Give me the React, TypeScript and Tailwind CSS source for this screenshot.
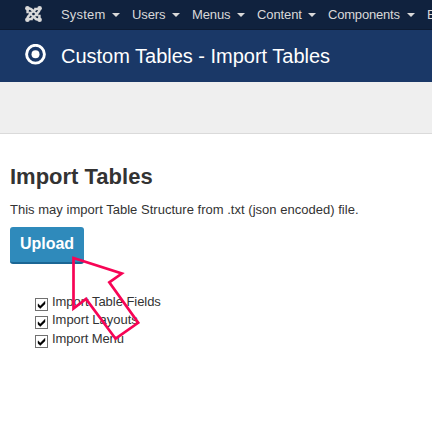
import React from 'react';

const menus = [
  { label: 'System', width: 'w-[71px]', spacing: 'tracking-[0.2px]' },
  { label: 'Users', width: 'w-[60px]', spacing: 'tracking-[-0.1px]' },
  { label: 'Menus', width: 'w-[65px]', spacing: 'tracking-[-0.1px]' },
  { label: 'Content', width: 'w-[71px]', spacing: 'tracking-[-0.1px]' },
  { label: 'Components', width: 'w-[99px]', spacing: 'tracking-[-0.2px]' },
  { label: 'Extensions', width: 'w-[90px]', spacing: 'tracking-[0.1px]' },
];

const options = [
  { label: 'Import Table Fields', height: 'h-[18px]', spacing: 'tracking-[-0.04px]' },
  { label: 'Import Layouts', height: 'h-[19px]', spacing: 'tracking-[-0.02px]' },
  { label: 'Import Menu', height: 'h-[18px]', spacing: 'tracking-[-0.1px]' },
];

function JoomlaIcon() {
  return (
    <svg className="ml-[25px] mt-[6px] h-4 w-[17px] shrink-0" viewBox="0 0 17 16" fill="none" stroke="#d9d9d9">
      <g strokeWidth="2.5" strokeLinejoin="round">
        <path d="M2.6 7.2V4.2Q2.6 2.4 4.4 2.4Q5.8 2.4 6.8 3.6L12.9 9.8" />
        <path d="M9.2 3.1H12.3Q14.4 2.6 14.4 4.4Q14.2 5.6 12.9 6.6L6.8 12.4" />
        <path d="M14.4 8.8V11.8Q14.4 13.6 12.6 13.6Q11.2 13.6 10.2 12.4L4.1 6.2" />
        <path d="M7.8 12.9H4.7Q2.6 13.4 2.6 11.6Q2.8 10.4 4.1 9.4L10.2 3.6" />
      </g>
      <g fill="#d9d9d9" stroke="none">
        <circle cx="2.4" cy="2.3" r="2.3" />
        <circle cx="14.6" cy="2.3" r="2.3" />
        <circle cx="2.4" cy="13.7" r="2.3" />
        <circle cx="14.6" cy="13.7" r="2.3" />
      </g>
      <circle cx="8.5" cy="8" r="1.3" fill="#10223e" stroke="none" />
    </svg>
  );
}

function CheckedBox() {
  return (
    <svg className="h-[13px] w-[13px] shrink-0" viewBox="0 0 13 13">
      <rect x=".5" y=".5" width="12" height="12" fill="#fff" stroke="#707070" />
      <path d="M3 5.8L5.3 8L10 3.2V6L5.3 10.6L3 8.4Z" fill="#000" stroke="#000" strokeWidth=".4" />
    </svg>
  );
}

export default function App() {
  return (
    <div className="relative h-[443px] w-[432px] overflow-hidden bg-white font-['Liberation_Sans',Arial,sans-serif] text-[13px] leading-[18px] text-[#333]">
      <nav className="flex h-[30px] overflow-hidden border-b border-[#0d1b32] bg-[#10223e] text-[#d9d9d9]">
        <JoomlaIcon />
        <div className="ml-[19px] flex shrink-0 pt-[6px]">
          {menus.map((menu) => (
            <div key={menu.label} className={`flex shrink-0 justify-between pr-[12px] ${menu.width}`}>
              <span className={menu.spacing}>{menu.label}</span>
              <i className="mt-[7px] h-0 w-0 border-x-4 border-t-4 border-x-transparent border-t-[#d9d9d9]" />
            </div>
          ))}
        </div>
      </nav>
      <header className="flex h-[52px] bg-[#1a3867] text-white">
        <svg className="ml-[25px] mt-[14px] h-[21px] w-[21px]" viewBox="0 0 21 21">
          <circle cx="10.5" cy="10.2" r="8.9" fill="none" stroke="white" strokeWidth="2.9" />
          <circle cx="10.5" cy="10.2" r="4" fill="white" />
        </svg>
        <h1 className="ml-[15px] mt-[11px] text-[20px] leading-[30px] tracking-[-0.01px]">Custom Tables - Import Tables</h1>
      </header>
      <div className="h-[52px] border-b border-[#dadada] bg-[#efefef]" />
      <main className="px-[10px] pt-[25px]">
        <h2 className="text-[22px] font-bold leading-9">Import Tables</h2>
        <p className="mt-[6px] whitespace-nowrap tracking-[0.02px]">This may import Table Structure from .txt (json encoded) file.</p>
        <button className="mt-[8px] block h-[37px] w-[74px] rounded-[3px] border-b-2 border-[#1b6694] bg-[#2f8abb] pb-[2px] text-[16px] font-bold leading-[33px] text-white">Upload</button>
        <div className="ml-[25px] mt-[29px]">
          {options.map((option) => (
            <label key={option.label} className={`flex ${option.height}`}>
              <span className="mt-[5px]"><CheckedBox /></span>
              <span className={`ml-[4px] ${option.spacing}`}>{option.label}</span>
            </label>
          ))}
        </div>
      </main>
      <svg className="pointer-events-none absolute left-[65px] top-[250px] h-[100px] w-[84px]" viewBox="65 250 84 100" fill="none" stroke="#f70455" strokeWidth="2.7">
        <path d="M73.5 258L121.8 273.5L109.3 282.4L138.2 322.8L115.6 338.7L86 299L73.5 308.5Z" />
      </svg>
    </div>
  );
}
